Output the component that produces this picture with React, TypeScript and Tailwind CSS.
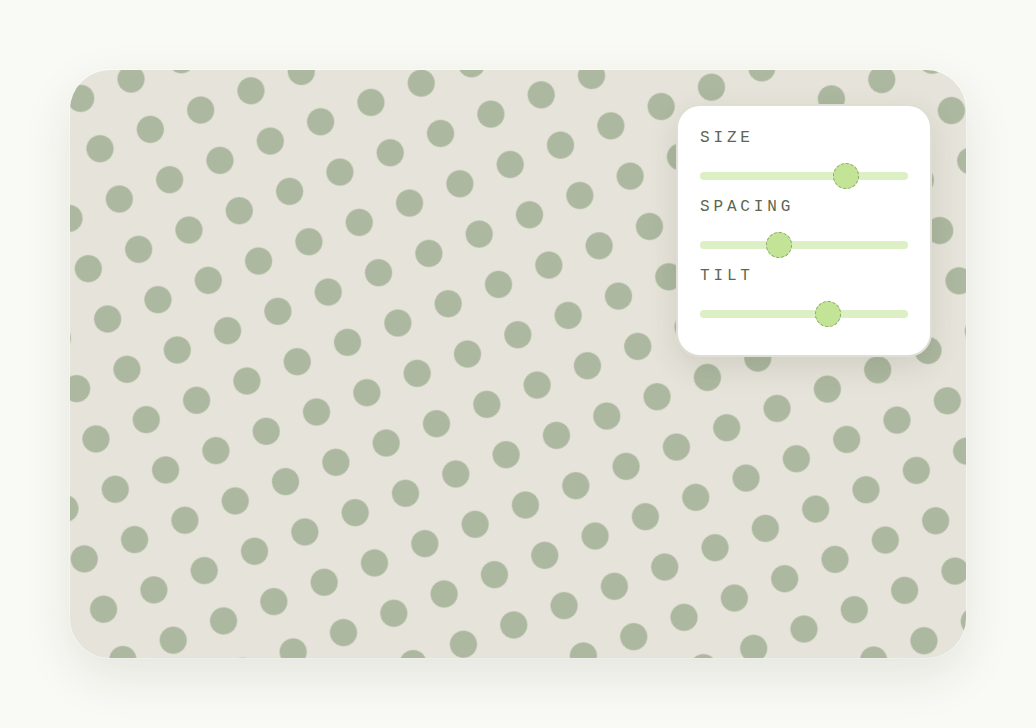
import React from 'react';

const sliders = [
  { label: 'SIZE', value: 0.7 },
  { label: 'SPACING', value: 0.38 },
  { label: 'TILT', value: 0.615 },
];

function DotField() {
  return (
    <svg className="absolute inset-0 h-full w-full" width="896" height="588">
      <defs>
        <pattern
          id="dots"
          patternUnits="userSpaceOnUse"
          width="53.9"
          height="53.9"
          patternTransform="translate(61 9) rotate(-21) translate(-27 -27)"
        >
          <circle cx="27" cy="27" r="13.6" fill="#adb8a0" />
        </pattern>
      </defs>
      <rect width="100%" height="100%" fill="url(#dots)" />
    </svg>
  );
}

function Slider({ label, value }: { label: string; value: number }) {
  return (
    <div className="flex flex-col">
      <div className="h-6 text-base leading-6 tracking-[0.24em] text-[#5b674f] font-['Liberation_Mono',monospace]">
        {label}
      </div>
      <div className="relative mt-[12.5px] flex h-[26px] items-center">
        <div className="h-2 w-full rounded-full bg-[#dcefc5]" />
        <div
          className="absolute top-0 h-[26px] w-[26px] -translate-x-1/2 rounded-full border border-dashed border-[#86a566] bg-[#c3e396]"
          style={{ left: `${value * 100}%` }}
        />
      </div>
    </div>
  );
}

export default function App() {
  return (
    <div className="min-h-screen bg-[#f9f9f5] p-[70px]">
      <div className="relative h-[588px] w-[896px] overflow-hidden rounded-[40px] bg-[#e6e4da] shadow-[0_18px_50px_rgba(60,60,40,0.10),0_0_0_1px_rgba(255,255,255,0.6)]">
        <DotField />
        <div className="absolute right-[34px] top-[34px] flex w-[256px] flex-col gap-[6.5px] rounded-[24px] border-2 border-[#deded5] bg-white px-[22px] pb-[28px] pt-[20px] shadow-[0_10px_30px_rgba(60,60,40,0.12)]">
          {sliders.map((s) => (
            <Slider key={s.label} label={s.label} value={s.value} />
          ))}
        </div>
      </div>
    </div>
  );
}
